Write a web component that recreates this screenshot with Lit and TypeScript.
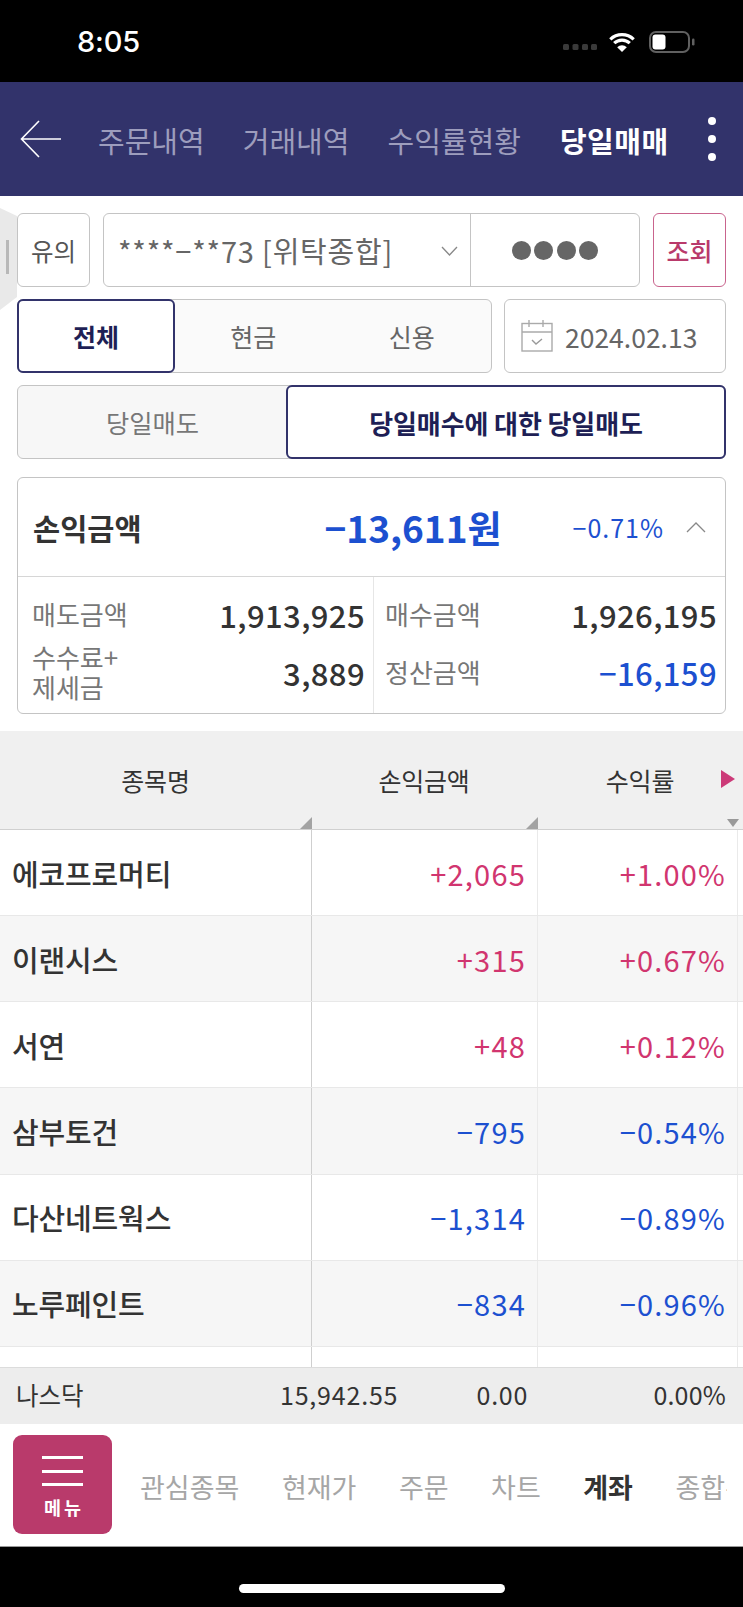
import { LitElement, html, css } from "lit";
import { customElement } from "lit/decorators.js";

const rows = [
  ["에코프로머티", "+2,065", "+1.00%", "up"],
  ["이랜시스", "+315", "+0.67%", "up"],
  ["서연", "+48", "+0.12%", "up"],
  ["삼부토건", "−795", "−0.54%", "down"],
  ["다산네트웍스", "−1,314", "−0.89%", "down"],
  ["노루페인트", "−834", "−0.96%", "down"],
  ["", "", "", ""],
];

@customElement("app-root")
export class AppRoot extends LitElement {
  static styles = css`
    :host {
      display: block;
      position: relative;
      width: 743px;
      height: 1607px;
      overflow: hidden;
      background: #fff;
      font-family: "Noto Sans CJK KR", "Noto Sans", sans-serif;
      color: #333;
    }
    * { box-sizing: border-box; }
    .status {
      height: 82px;
      background: #000;
      display: flex;
      align-items: center;
      justify-content: space-between;
      padding: 1px 48px 0 77px;
      color: #fff;
    }
    .time { font: 500 29px/1 "Inter", sans-serif; letter-spacing: -0.2px; }
    .status-r { display: flex; align-items: center; }
    .sdots { width: 34px; height: 6px; margin: 10px 11px 0 0; }
    .wifi { width: 28px; height: 20px; margin-right: 13px; }
    .batt { width: 46px; height: 22px; }
    .header {
      height: 114px;
      background: #32336b;
      display: flex;
      align-items: center;
      padding-left: 20px;
      position: relative;
    }
    .back { width: 42px; height: 38px; flex: none; margin-right: 36px; }
    .htab { font-size: 29px; color: #9d9dbd; margin-right: 38px; white-space: nowrap; line-height: 1; padding-top: 2px; }
    .htab.on { color: #fff; font-weight: 700; margin-right: 0; margin-left: 1px; letter-spacing: 0.5px; }
    .dots { margin-left: auto; margin-right: 27px; display: flex; flex-direction: column; gap: 10px; }
    .dots i { display: block; width: 8px; height: 8px; border-radius: 50%; background: #fff; }
    .controls { padding: 17px 17px 0; display: flex; flex-direction: column; gap: 12px; }
    .line { display: flex; }
    .box {
      border: 1px solid #c4c4c4;
      border-radius: 6px;
      background: #fff;
      display: flex;
      align-items: center;
      justify-content: center;
      font-size: 25px;
      color: #555;
      height: 74px;
    }
    .l1 { gap: 13px; }
    .warn { width: 73px; flex: none; font-size: 24.5px; }
    .acct { width: 537px; flex: none; justify-content: flex-start; }
    .acct-no { flex: 1; display: flex; align-items: center; padding-left: 14px; height: 100%; font-size: 29px; letter-spacing: 0.8px; border-right: 1px solid #c4c4c4; position: relative; color: #666; white-space: pre; }
    .chev { position: absolute; left: 337px; top: 32px; width: 17px; height: 10px; }
    .pw { width: 168px; flex: none; display: flex; justify-content: center; gap: 3.5px; }
    .pw i { width: 19px; height: 19px; border-radius: 50%; background: #666; }
    .search { width: 73px; flex: none; color: #b93a6b; border-color: #c9648d; font-weight: 500; }
    .l2 { justify-content: space-between; }
    .seg { width: 475px; background: #fafafa; justify-content: flex-start; position: relative; }
    .seg span { flex: 1; text-align: center; color: #666; }
    .seg .sel, .seg2 .sel {
      background: #fff;
      border: 2px solid #32336b;
      border-radius: 6px;
      color: #1e1f55;
      font-weight: 700;
      display: flex;
      align-items: center;
      justify-content: center;
      height: 74px;
      margin: -1px;
    }
    .seg .sel { flex: none; width: 158px; }
    .date { width: 222px; justify-content: flex-start; padding-left: 16px; gap: 12px; font-size: 26.5px; color: #666; }
    .seg2 { width: 100%; background: #f7f7f7; justify-content: flex-start; }
    .seg2 span { flex: 1; text-align: center; color: #777; font-size: 25.3px; }
    .seg2 .sel { flex: none; width: 440px; font-size: 26px; letter-spacing: -0.1px; }
    .card { margin: 18px 17px 0; height: 237px; border: 1px solid #c4c4c4; border-radius: 6px; }
    .card-top { height: 99px; display: flex; align-items: center; border-bottom: 1px solid #d6d6d6; padding: 0 19px 0 15px; }
    .title { font-size: 29.5px; font-weight: 700; color: #333; }
    .total { margin-left: auto; font-size: 37px; font-weight: 700; color: #1c50d0; }
    .pct { margin-left: 71px; font-size: 25px; color: #1c50d0; letter-spacing: 1px; }
    .up { width: 20px; height: 11px; margin-left: 22px; flex: none; }
    .card-body { display: grid; grid-template-columns: 355px 1fr; height: 136px; }
    .col { padding: 8px 8px 0 14px; display: grid; grid-template-rows: 58px 58px; }
    .col + .col { border-left: 1px solid #e6e6e6; padding-left: 11px; }
    .kv { display: flex; justify-content: space-between; align-items: center; }
    .k { font-size: 26px; color: #777; line-height: 30px; }
    .v { font-size: 31px; font-weight: 500; color: #333; letter-spacing: 0.4px; }
    .v.blue { color: #1c50d0; }
    .table { margin-top: 17px; }
    .thead { height: 99px; background: #f0f0f0; border-bottom: 1px solid #d0d0d0; display: grid; grid-template-columns: 311px 226px 1fr; position: relative; }
    .th { display: flex; align-items: center; justify-content: center; font-size: 25px; color: #333; position: relative; letter-spacing: -0.2px; }
    .corner { position: absolute; right: -1px; bottom: 0; width: 0; height: 0; border-left: 12px solid transparent; border-bottom: 12px solid #a3a3a3; }
    .more { position: absolute; right: 8px; top: 39px; width: 0; height: 0; border-left: 14px solid #cc3a78; border-top: 9px solid transparent; border-bottom: 9px solid transparent; }
    .sort { position: absolute; right: 4px; bottom: 2px; width: 0; height: 0; border-top: 8px solid #999; border-left: 6px solid transparent; border-right: 6px solid transparent; }
    .tr { height: 86.17px; display: grid; grid-template-columns: 311px 226px 201px 5px; border-bottom: 1px solid #e8e8e8; background: #fff; }
    .tr.alt { background: #f6f6f6; }
    .tr.last { height: 20px; border-bottom: 0; }
    .td { display: flex; align-items: center; justify-content: flex-end; font-size: 29px; padding-right: 11px; border-left: 1px solid #eaeaea; letter-spacing: 1.2px; }
    .td.up-c { color: #d1356f; }
    .td.down-c { color: #1c50d0; }
    .td.pc { border-right: 1px solid #eaeaea; }
    .name { justify-content: flex-start; padding-left: 12px; color: #333; font-weight: 500; border-left: 0; font-size: 29px; letter-spacing: -0.15px; }
    .tr .td:nth-child(2) { border-left-color: #cfcfcf; }
    .foot { height: 57px; background: #ededed; border-top: 1px solid #dcdcdc; display: flex; align-items: center; font-size: 25px; color: #333; padding-bottom: 3px; }
    .foot span { white-space: nowrap; }
    .f1 { width: 280px; padding-left: 16px; font-size: 24.5px; }
    .f2 { width: 117px; text-align: right; letter-spacing: 0.8px; }
    .f3 { width: 131px; text-align: right; letter-spacing: 0.7px; }
    .f4 { width: 198px; text-align: right; letter-spacing: 0.2px; }
    .nav { height: 123px; background: #fff; display: flex; align-items: center; padding-left: 13px; border-bottom: 1px solid #999; overflow: hidden; }
    .menu { width: 99px; height: 99px; flex: none; border-radius: 9px; background: #b93a6b; color: #fff; display: flex; flex-direction: column; align-items: center; padding-top: 21px; margin-right: 28px; }
    .menu i { display: block; width: 41px; height: 3px; background: #fff; margin-bottom: 10.5px; }
    .menu b { font-size: 18.5px; line-height: 1; margin-top: 1px; letter-spacing: 3px; margin-right: -3px; font-weight: 700; }
    .ntab { font-size: 27px; color: #a6a6a6; margin-right: 42.5px; white-space: nowrap; flex: none; padding-top: 3px; }
    .ntab.on { color: #333; font-weight: 700; }
    .navwrap { flex: 1; display: flex; overflow: hidden; margin-right: 16px; }
    .bottom { height: 60px; background: #000; display: flex; justify-content: center; padding-top: 37px; }
    .home { width: 266px; height: 9px; border-radius: 5px; background: #fff; }
    .handle { position: absolute; left: 0; top: 208px; width: 17px; height: 102px; background: #e9e9e9; clip-path: polygon(0 0, 17px 8px, 17px 89px, 0 102px); }
    .handle i { position: absolute; left: 6px; top: 32px; width: 2.5px; height: 34px; background: #b8b8b8; }
  `;

  render() {
    return html`
      <div class="status">
        <div class="time">8:05</div>
        <div class="status-r">
          <svg class="sdots" viewBox="0 0 34 6"><g fill="#3a3a3a"><rect x="0" width="6" height="6" rx="1.5"/><rect x="9.5" width="6" height="6" rx="1.5"/><rect x="19" width="6" height="6" rx="1.5"/><rect x="28" width="6" height="6" rx="1.5"/></g></svg>
          <svg class="wifi" viewBox="0 0 28 20"><path d="M2.3 7.3A17 17 0 0 1 25.7 7.3M6.2 11.2A11.4 11.4 0 0 1 21.8 11.2" fill="none" stroke="#fff" stroke-width="3.2"/><path d="M14 20 9.2 15.2A6.8 6.8 0 0 1 18.8 15.2Z" fill="#fff"/></svg>
          <svg class="batt" viewBox="0 0 46 22"><rect x="1" y="1" width="39" height="20" rx="6" fill="none" stroke="#606060" stroke-width="2"/><rect x="3.5" y="3.5" width="13" height="15" rx="3" fill="#fff"/><rect x="43" y="7.5" width="2.5" height="7" rx="1.2" fill="#606060"/></svg>
        </div>
      </div>
      <div class="header">
        <svg class="back" viewBox="0 0 42 38"><path d="M41 19H2M19 1 1.5 19 19 37" fill="none" stroke="#fff" stroke-width="1.6"/></svg>
        <span class="htab">주문내역</span>
        <span class="htab">거래내역</span>
        <span class="htab">수익률현황</span>
        <span class="htab on">당일매매</span>
        <div class="dots"><i></i><i></i><i></i></div>
      </div>
      <div class="controls">
        <div class="line l1">
          <div class="box warn">유의</div>
          <div class="box acct">
            <div class="acct-no">****−**73 [위탁종합]<svg class="chev" viewBox="0 0 17 10"><path d="M1 1 8.5 9 16 1" fill="none" stroke="#888" stroke-width="1.3"/></svg></div>
            <div class="pw"><i></i><i></i><i></i><i></i></div>
          </div>
          <div class="box search">조회</div>
        </div>
        <div class="line l2">
          <div class="box seg">
            <span class="sel">전체</span><span>현금</span><span>신용</span>
          </div>
          <div class="box date">
            <svg width="32" height="32" viewBox="0 0 32 32"><g fill="none" stroke="#aaa" stroke-width="1.4"><rect x="1" y="3.5" width="30" height="27.5"/><path d="M1 12H31M8 0V7M22 0V7"/><path d="M11 20l4 4 6-5" stroke="#999"/></g></svg>
            2024.02.13
          </div>
        </div>
        <div class="line">
          <div class="box seg2"><span>당일매도</span><span class="sel">당일매수에 대한 당일매도</span></div>
        </div>
      </div>
      <div class="card">
        <div class="card-top">
          <span class="title">손익금액</span>
          <span class="total">−13,611원</span>
          <span class="pct">−0.71%</span>
          <svg class="up" viewBox="0 0 20 11"><path d="M1 10 10 1 19 10" fill="none" stroke="#888" stroke-width="1.3"/></svg>
        </div>
        <div class="card-body">
          <div class="col">
            <div class="kv"><span class="k">매도금액</span><span class="v">1,913,925</span></div>
            <div class="kv"><span class="k">수수료+<br />제세금</span><span class="v">3,889</span></div>
          </div>
          <div class="col">
            <div class="kv"><span class="k">매수금액</span><span class="v">1,926,195</span></div>
            <div class="kv"><span class="k">정산금액</span><span class="v blue">−16,159</span></div>
          </div>
        </div>
      </div>
      <div class="table">
        <div class="thead">
          <div class="th">종목명<i class="corner"></i></div>
          <div class="th">손익금액<i class="corner"></i></div>
          <div class="th">수익률</div>
          <i class="more"></i><i class="sort"></i>
        </div>
        ${rows.map(
          (r, i) => html`<div class="tr ${i % 2 ? "alt" : ""} ${i === 6 ? "last" : ""}">
            <div class="td name">${r[0]}</div>
            <div class="td ${r[3] === "up" ? "up-c" : "down-c"}">${r[1]}</div>
            <div class="td pc ${r[3] === "up" ? "up-c" : "down-c"}">${r[2]}</div>
          </div>`
        )}
      </div>
      <div class="foot">
        <span class="f1">나스닥</span><span class="f2">15,942.55</span><span class="f3">0.00</span><span class="f4">0.00%</span>
      </div>
      <div class="nav">
        <div class="menu"><i></i><i></i><i></i><b>메뉴</b></div>
        <div class="navwrap">
          <span class="ntab">관심종목</span><span class="ntab">현재가</span><span class="ntab">주문</span><span class="ntab">차트</span><span class="ntab on">계좌</span><span class="ntab">종합뉴스</span>
        </div>
      </div>
      <div class="bottom"><div class="home"></div></div>
      <div class="handle"><i></i></div>
    `;
  }
}
